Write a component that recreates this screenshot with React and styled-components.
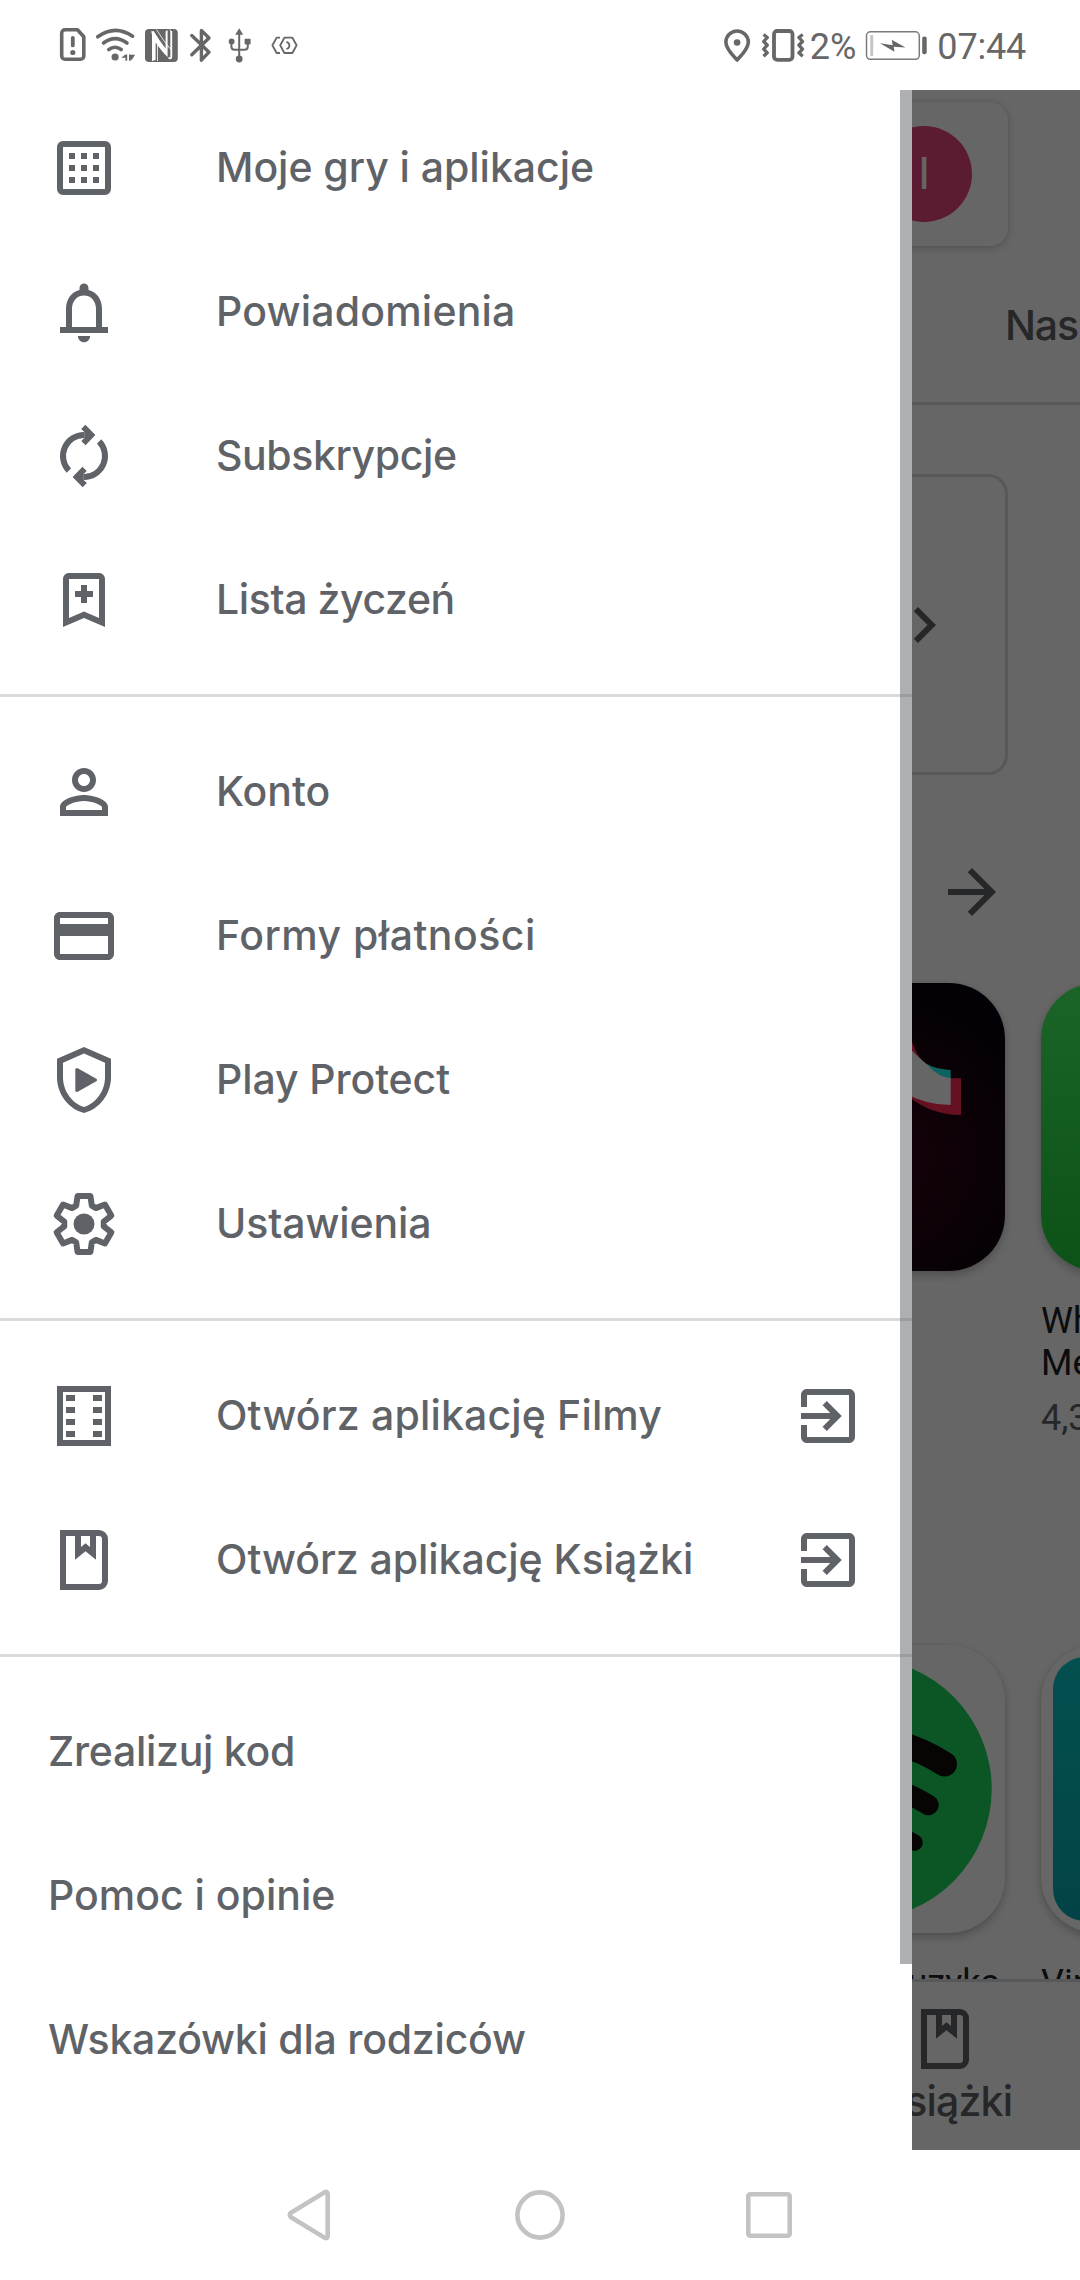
import React from "react";
import styled, { createGlobalStyle } from "styled-components";

const GlobalStyle = createGlobalStyle`
  *, *::before, *::after { box-sizing: border-box; }
  body { margin: 0; background: #fff; }
`;

const brandFont = `Inter, "Open Sans", sans-serif`;
const systemFont = `Roboto, "Noto Sans", sans-serif`;

const Phone = styled.div`
  display: flex;
  flex-direction: column;
  width: 1080px;
  height: 2280px;
  overflow: hidden;
  background: #fff;
`;

/* ---------- status bar ---------- */

const StatusBar = styled.header`
  display: flex;
  justify-content: space-between;
  align-items: center;
  flex: none;
  height: 90px;
  padding: 0 54px 0 59px;
  color: #676767;
  font: 400 36px/42px ${systemFont};
`;

const StatusGroup = styled.div`
  display: flex;
  align-items: center;
`;

const StatusIcon = styled.svg`
  display: block;
  flex: none;
  width: ${(p) => p.$w}px;
  height: 40px;
  margin-right: ${(p) => p.$gap || 0}px;
  overflow: visible;
`;

const StatusText = styled.span`
  padding-top: 3px;
  margin-right: ${(p) => p.$gap || 0}px;
  letter-spacing: ${(p) => p.$track || 0}px;
`;

/* ---------- viewport ---------- */

const Viewport = styled.div`
  position: relative;
  flex: none;
  height: 2060px;
  overflow: hidden;
`;

const Store = styled.main`
  display: flex;
  flex-direction: column;
  height: 100%;
  background: #fff;
`;

const StoreBody = styled.div`
  flex: none;
  height: 1889px;
  overflow: hidden;
`;

const SearchCard = styled.div`
  display: flex;
  align-items: center;
  justify-content: flex-end;
  width: 936px;
  height: 144px;
  margin: 12px 0 0 72px;
  padding-right: 36px;
  border-radius: 18px;
  background: #fff;
  box-shadow: 0 2px 9px rgba(0, 0, 0, 0.2), 0 0 3px rgba(0, 0, 0, 0.08);
`;

const Avatar = styled.div`
  display: flex;
  align-items: center;
  justify-content: center;
  width: 96px;
  height: 96px;
  border-radius: 50%;
  background: #e3447a;
  color: #fff;
  font: 400 45px/48px ${systemFont};
`;

const TabStrip = styled.nav`
  display: flex;
  align-items: center;
  justify-content: flex-end;
  height: 159px;
  padding-top: 1px;
  border-bottom: 3px solid #dadce0;
`;

const Tab = styled.span`
  width: 75px;
  white-space: nowrap;
  overflow: hidden;
  color: #5f6368;
  font: 500 41px/54px ${brandFont};
  letter-spacing: -1.2px;
`;

const PromoCard = styled.div`
  display: flex;
  align-items: center;
  justify-content: flex-end;
  width: 936px;
  height: 301px;
  margin: 69px 0 0 72px;
  padding-right: 45px;
  border: 3px solid #dadce0;
  border-radius: 20px;
`;

const Icon = styled.svg`
  display: block;
  flex: none;
  width: 72px;
  height: 72px;
  fill: ${(p) => p.$color || "#5f6368"};
`;

const SectionHeader = styled.div`
  display: flex;
  justify-content: flex-end;
  padding: 81px 72px 55px;
`;

const AppRow = styled.div`
  display: flex;
  gap: 36px;
  height: ${(p) => p.$h}px;
  padding-left: 717px;
`;

const AppCell = styled.div`
  display: flex;
  flex-direction: column;
  flex: none;
  width: 288px;
`;

const AppIcon = styled.div`
  display: flex;
  align-items: center;
  justify-content: center;
  flex: none;
  width: 288px;
  height: 288px;
  overflow: hidden;
  border-radius: 56px;
  background: ${(p) => p.$bg || "#fff"};
  box-shadow: 0 4px 10px rgba(0, 0, 0, 0.24), 0 0 3px rgba(0, 0, 0, 0.06);

  svg {
    display: block;
    width: 288px;
    height: 288px;
  }
`;

const TealTile = styled.div`
  width: 264px;
  height: 264px;
  border-radius: 32px;
  background: linear-gradient(#09c8ca, #08a8b2);
`;

const AppName = styled.div`
  margin-top: 29px;
  color: #202124;
  font: 400 36px/42px ${systemFont};
  white-space: pre-line;
  text-align: ${(p) => p.$align || "left"};
  padding-right: 5px;
`;

const AppRating = styled.div`
  margin-top: 13px;
  color: #5f6368;
  font: 400 36px/42px ${systemFont};
`;

const BottomNav = styled.nav`
  display: flex;
  justify-content: flex-end;
  flex: 1;
  padding: 21px 45px 0 0;
  border-top: 3px solid #dadce0;
`;

const BottomTab = styled.div`
  display: flex;
  flex-direction: column;
  align-items: center;
  width: 180px;
  color: #5f6368;
  font: 500 41px/53px ${brandFont};
  letter-spacing: -0.8px;
`;

/* ---------- drawer ---------- */

const Scrim = styled.div`
  position: absolute;
  inset: 0;
  background: rgba(0, 0, 0, 0.6);
`;

const Drawer = styled.aside`
  position: absolute;
  inset: 0 auto 0 0;
  width: 912px;
  padding-top: 6px;
  background: #fff;
`;

const ScrollThumb = styled.div`
  position: absolute;
  top: 0;
  right: 0;
  width: 12px;
  height: 1874px;
  background: rgba(92, 96, 104, 0.5);
`;

const Group = styled.ul`
  list-style: none;
  margin: 0;
  padding: 0 0 22px;

  & + & {
    padding-top: 23px;
    border-top: 3px solid #dbdbde;
  }
`;

const Item = styled.li`
  display: flex;
  align-items: center;
  height: 144px;
  padding: 0 48px;
`;

const ItemLabel = styled.span`
  flex: 1;
  padding-bottom: 2px;
  margin-left: ${(p) => (p.$inset ? 96 : 0)}px;
  color: #5f6368;
  font: 500 41px/54px ${brandFont};
  letter-spacing: ${(p) => p.$track || 0}px;
  white-space: nowrap;
`;

/* ---------- system navigation ---------- */

const SystemNav = styled.footer`
  display: flex;
  align-items: center;
  flex: 1;
  padding-left: 283px;
`;

const NavGlyph = styled.svg`
  display: block;
  width: 54px;
  height: 54px;
  margin-right: ${(p) => p.$gap || 0}px;
  fill: none;
  stroke: #c3c3c3;
  stroke-width: 4.6;
  stroke-linejoin: round;
`;

/* ---------- icon drawings (24 unit grid) ---------- */

const rotate = ([x, y], deg) => {
  const a = (deg * Math.PI) / 180;
  return [
    12 + x * Math.cos(a) - y * Math.sin(a),
    12 + x * Math.sin(a) + y * Math.cos(a),
  ];
};

const gearTooth = [[-2.6, -6.1], [-2.15, -9.3], [2.15, -9.3], [2.6, -6.1]];
const gearPoints = [0, 60, 120, 180, 240, 300]
  .flatMap((deg) => gearTooth.map((pt) => rotate(pt, deg)))
  .map(([x, y]) => `${x.toFixed(2)},${y.toFixed(2)}`)
  .join(" ");

const grid = [7, 11, 15];
const perforations = [5, 9, 13, 17];

const Glyph = {
  apps: (
    <>
      <path fillRule="evenodd" d="M5 3h14a2 2 0 0 1 2 2v14a2 2 0 0 1-2 2H5a2 2 0 0 1-2-2V5a2 2 0 0 1 2-2zM5 5v14h14V5z" />
      {grid.flatMap((y) => grid.map((x) => <rect key={`${x}-${y}`} x={x} y={y} width="2" height="2" />))}
    </>
  ),
  bell: (
    <path d="M20 17h-2v-6c0-3.07-1.63-5.64-4.5-6.32V4c0-.83-.67-1.5-1.5-1.5s-1.5.67-1.5 1.5v.68C7.64 5.36 6 7.92 6 11v6H4v2h16v-2zm-4 0H8v-6c0-2.48 1.51-4.5 4-4.5s4 2.02 4 4.5v6zM12 22.1c1.1 0 2-.9 2.05-2.1h-4.1c.05 1.2.95 2.1 2.05 2.1z" />
  ),
  sync: (
    <>
      <g fill="none" stroke="#5f6368" strokeWidth="2">
        <path d="M12.1 5A7 7 0 0 0 6.95 16.85" />
        <path d="M11.9 19A7 7 0 0 0 17.05 7.15" />
      </g>
      <path d="M12.45 1.6 11.05 3l1.05 1v2l-1 1 1.4 1.4L15.8 5z" />
      <path d="M11.55 22.4 12.95 21l-1.05-1v-2l1-1-1.4-1.4L8.2 19z" />
    </>
  ),
  wishlist: (
    <>
      <path d="M17 3H7c-1.1 0-2 .9-2 2v16l7-3 7 3V5c0-1.1-.9-2-2-2zm0 14.97-5-2.17-5 2.17V5h10v12.97z" />
      <path d="M11 7h2v2h2v2h-2v2h-2v-2H9V9h2z" />
    </>
  ),
  person: (
    <path d="M12 12c2.21 0 4-1.79 4-4s-1.79-4-4-4-4 1.79-4 4 1.79 4 4 4zm0-6c1.1 0 2 .9 2 2s-.9 2-2 2-2-.9-2-2 .9-2 2-2zM12 13c-2.67 0-8 1.34-8 4v3h16v-3c0-2.66-5.33-4-8-4zm6 5H6v-.99c.2-.72 3.3-2.01 6-2.01s5.8 1.29 6 2v1z" />
  ),
  card: (
    <path d="M20 4H4c-1.11 0-2 .89-2 2v12c0 1.11.89 2 2 2h16c1.11 0 2-.89 2-2V6c0-1.11-.89-2-2-2zm0 14H4v-6h16v6zm0-10H4V6h16v2z" />
  ),
  shield: (
    <>
      <path d="M12 1 3 4.9v6.2c0 5.55 3.84 10.65 9 11.9 5.16-1.25 9-6.35 9-11.9V4.9L12 1zm7 10.1c0 4.52-2.98 8.66-7 9.9-4.02-1.24-7-5.38-7-9.9V6.25l7-3.05 7 3.05v4.85z" />
      <path d="M9.9 8.1 16.1 11.6a.45.45 0 0 1 0 .8L9.9 15.9a.5.5 0 0 1-.8-.4v-7a.5.5 0 0 1 .8-.4z" />
    </>
  ),
  settings: (
    <>
      <polygon points={gearPoints} fill="none" stroke="#5f6368" strokeWidth="2" strokeLinejoin="round" />
      <circle cx="12" cy="12" r="3.5" />
    </>
  ),
  film: (
    <>
      <path fillRule="evenodd" d="M3 2h18v20H3zM5 4v16h14V4z" />
      {perforations.flatMap((y) => [6, 15].map((x) => <rect key={`${x}-${y}`} x={x} y={y} width="3" height="2" />))}
    </>
  ),
  book: (
    <>
      <path fillRule="evenodd" d="M4 2h13a3 3 0 0 1 3 3v14a3 3 0 0 1-3 3H4zM6 4v16h11a1 1 0 0 0 1-1V5a1 1 0 0 0-1-1z" />
      <path fillRule="evenodd" d="M9 3.5h7v8.4l-3.5-2.85L9 11.9zM11 4v3.7l1.5-1.3L14 7.7V4z" />
    </>
  ),
  exit: (
    <path d="M10.19 15.59 11.6 17l5-5-5-5-1.41 1.41L12.77 11H3v2h9.77l-2.58 2.59zM19 3H5c-1.11 0-2 .9-2 2v4h2V5h14v14H5v-4H3v4c0 1.1.89 2 2 2h14c1.1 0 2-.9 2-2V5c0-1.1-.9-2-2-2z" />
  ),
  chevron: <path d="M10 6 8.59 7.41 13.17 12l-4.58 4.59L10 18l6-6z" />,
  arrow: <path d="m12 4-1.41 1.41L16.17 11H4v2h12.17l-5.58 5.59L12 20l8-8z" />,
};

const GlyphIcon = ({ name }) => <Icon viewBox="0 0 24 24">{Glyph[name]}</Icon>;

const menu = [
  [
    { icon: "apps", label: "Moje gry i aplikacje", track: -0.04 },
    { icon: "bell", label: "Powiadomienia", track: 0.2 },
    { icon: "sync", label: "Subskrypcje", track: -0.4 },
    { icon: "wishlist", label: "Lista życzeń", track: -0.4 },
  ],
  [
    { icon: "person", label: "Konto" },
    { icon: "card", label: "Formy płatności", track: 0.48 },
    { icon: "shield", label: "Play Protect", track: -0.1 },
    { icon: "settings", label: "Ustawienia", track: -0.12 },
  ],
  [
    { icon: "film", label: "Otwórz aplikację Filmy", track: 0.16, external: true },
    { icon: "book", label: "Otwórz aplikację Książki", track: -0.05, external: true },
  ],
  [
    { label: "Zrealizuj kod", track: -0.28 },
    { label: "Pomoc i opinie", track: 0 },
    { label: "Wskazówki dla rodziców", track: -0.22 },
  ],
];

const StatusIcons = () => (
  <StatusGroup>
    <StatusIcon $w={28} $gap={8} viewBox="59 25 28 40">
      <path d="M65 29.8h12.5l6.3 7V56a3.3 3.3 0 0 1-3.3 3.3H65a3.3 3.3 0 0 1-3.3-3.3V33.1a3.3 3.3 0 0 1 3.3-3.3z" fill="none" stroke="#676767" strokeWidth="3.6" strokeLinejoin="round" />
      <path d="M72.8 37.8v7.6" stroke="#676767" strokeWidth="3.8" strokeLinecap="round" />
      <circle cx="72.8" cy="52.5" r="2.6" fill="#676767" />
    </StatusIcon>
    <StatusIcon $w={41} $gap={8} viewBox="95 25 41 40">
      <g fill="none" stroke="#676767" strokeWidth="3.6" strokeLinecap="round">
        <path d="M97.7 36.8Q115 24.2 132.6 36.2" />
        <path d="M103.5 43Q115 34.4 127 43" />
        <path d="M108.8 49.5Q115 45 121.2 49.5" />
      </g>
      <circle cx="115.1" cy="57" r="3.6" fill="#676767" />
      <path d="M125.4 54.6v3.2h-4.2zM125.4 54.6h1.8v6.2h-1.8zM129 54.6h1.7v6.2H129zM130.7 54.8h4.4l-3.2 5h-1.2z" fill="#676767" />
    </StatusIcon>
    <StatusIcon $w={34} $gap={11} viewBox="144 25 34 40">
      <rect x="145" y="29" width="32.8" height="33" rx="4" fill="#676767" />
      <path d="M151 31.5q1 1 1 4V61l3.6-1V42.500q7 10 12 14.500V30l-2 1.500v17q-7-9-12-17.500z" fill="#fff" />
      <path d="M156.500 29.500Q164 42 171.300 50V34q0-3-1.500-4.500M157.500 44v17" fill="none" stroke="#fff" strokeWidth="0.8" />
      <path d="M168.500 57.500q2.600 2 2.800-.5V31" fill="none" stroke="#fff" strokeWidth="1.8" />
    </StatusIcon>
    <StatusIcon $w={24} $gap={14} viewBox="189 25 24 40">
      <path d="M191.8 35.5 209 52.2l-7.6 8V30.4l7.6 7.6-17.2 16.8" fill="none" stroke="#676767" strokeWidth="3.4" strokeLinejoin="round" strokeLinecap="round" />
    </StatusIcon>
    <StatusIcon $w={24} $gap={20} viewBox="227 25 24 40">
      <path d="M239.2 33v26M231.4 41v5.4q0 3.4 3.4 3.4h9.6q3.4 0 3.4-3.4V41" fill="none" stroke="#676767" strokeWidth="2" />
      <path d="M239.2 28.2l4 6.6h-8z" fill="#676767" />
      <circle cx="231.6" cy="41.4" r="2.9" fill="#676767" />
      <rect x="244.6" y="38.8" width="6" height="5.6" rx="0.8" fill="#676767" />
      <circle cx="239.2" cy="59" r="3.4" fill="#676767" />
    </StatusIcon>
    <StatusIcon $w={28} viewBox="271 25 28 40">
      <path d="M284.4 37.7h8l4.2 7.6-4.2 7.7h-8l-4.2-7.7zM280 37.7h-3.4l-4.2 7.6 4.2 7.7h3.4" fill="none" stroke="#676767" strokeWidth="1.8" strokeLinejoin="round" />
      <path d="M286.4 41.8q3 1 3 3.6t-3 3.6" fill="none" stroke="#676767" strokeWidth="1.8" />
    </StatusIcon>
  </StatusGroup>
);

const StatusInfo = () => (
  <StatusGroup>
    <StatusIcon $w={28} $gap={10} viewBox="723 25 28 40">
      <path d="M737.1 60c-4.6-5-11.2-11.2-11.2-17.8a11.2 11.2 0 0 1 22.4 0c0 6.6-6.6 12.8-11.2 17.8z" fill="none" stroke="#676767" strokeWidth="3.6" strokeLinejoin="round" />
      <circle cx="737.1" cy="42.5" r="3.3" fill="#676767" />
    </StatusIcon>
    <StatusIcon $w={44} $gap={5} viewBox="761 25 44 40">
      <rect x="774" y="31" width="18.5" height="28.8" rx="3.2" fill="none" stroke="#676767" strokeWidth="3.8" />
      <path d="M763.5 34.5l3.8 3-3.6 4 3.6 3.7-3.6 3.9 3.6 3.7-3.8 3.5M802.7 34.5l-3.8 3 3.6 4-3.6 3.7 3.6 3.9-3.6 3.7 3.8 3.5" fill="none" stroke="#676767" strokeWidth="3.3" strokeLinejoin="round" />
    </StatusIcon>
    <StatusText $gap={9}>2%</StatusText>
    <StatusIcon $w={62} $gap={10} viewBox="865 25 62 40">
      <rect x="866.5" y="31.8" width="52.8" height="27.5" rx="4" fill="none" stroke="#7b7b7b" strokeWidth="1.5" />
      <rect x="870.3" y="35" width="2.9" height="21" rx="1" fill="#c4c4c4" />
      <path d="M880 43.2l12.7 2.1-1-5.6L905.5 47.6l-11.8-.9.8 5z" fill="#676767" />
      <rect x="922.2" y="36.6" width="4.5" height="17.6" rx="2" fill="#676767" />
    </StatusIcon>
    <StatusText $track={-0.2}>07:44</StatusText>
  </StatusGroup>
);

const ShortVideoLogo = () => (
  <svg viewBox="717 983 288 288">
    <defs>
      <radialGradient id="stage" cx="0.55" cy="0.6" r="0.6">
        <stop offset="0" stopColor="#3c0418" />
        <stop offset="0.6" stopColor="#1c0310" />
        <stop offset="1" stopColor="#08040e" />
      </radialGradient>
    </defs>
    <rect x="717" y="983" width="288" height="288" fill="url(#stage)" />
    <path d="M908 1028Q914 1054 925 1063.5L950 1078.3H961V1115q-30 0-53-19z" fill="#fe2c55" />
    <path d="M924 1062.5Q936 1069.5 950.7 1070v8.5Q936 1077 924 1062.5z" fill="#25f4ee" />
    <path d="M905 1044Q917 1056 928 1065.5 939 1077.5 950.7 1078v27q-25 0-45.7-12z" fill="#fff" />
  </svg>
);

const MusicLogo = () => (
  <svg viewBox="717 1645 288 288">
    <circle cx="861" cy="1789" r="130.7" fill="#1ed75f" />
    <g fill="none" stroke="#100e0c" strokeLinecap="round">
      <path d="M777 1744Q875 1720 944.5 1764" strokeWidth="25" />
      <path d="M783 1786Q865 1766 928.5 1805" strokeWidth="20.5" />
      <path d="M790 1826Q860 1810 914.5 1842.5" strokeWidth="16.5" />
    </g>
  </svg>
);

export default function App() {
  return (
    <Phone>
      <GlobalStyle />
      <StatusBar>
        <StatusIcons />
        <StatusInfo />
      </StatusBar>

      <Viewport>
        <Store>
          <StoreBody>
            <SearchCard>
              <Avatar>I</Avatar>
            </SearchCard>
            <TabStrip>
              <Tab>Nasz</Tab>
            </TabStrip>
            <PromoCard>
              <GlyphIcon name="chevron" />
            </PromoCard>
            <SectionHeader>
              <GlyphIcon name="arrow" />
            </SectionHeader>
            <AppRow $h={662}>
              <AppCell>
                <AppIcon>
                  <ShortVideoLogo />
                </AppIcon>
              </AppCell>
              <AppCell>
                <AppIcon $bg="linear-gradient(#46fa64, #20cd3a)" />
                <AppName>{"WhatsApp\nMessenger"}</AppName>
                <AppRating>4,3</AppRating>
              </AppCell>
            </AppRow>
            <AppRow $h={400}>
              <AppCell>
                <AppIcon>
                  <MusicLogo />
                </AppIcon>
                <AppName $align="right">Spotify: muzyka</AppName>
              </AppCell>
              <AppCell>
                <AppIcon>
                  <TealTile />
                </AppIcon>
                <AppName>Vinted</AppName>
              </AppCell>
            </AppRow>
          </StoreBody>
          <BottomNav>
            <BottomTab>
              <GlyphIcon name="book" />
              Książki
            </BottomTab>
          </BottomNav>
        </Store>

        <Scrim />

        <Drawer>
          {menu.map((items) => (
            <Group key={items[0].label}>
              {items.map(({ icon, label, track, external }) => (
                <Item key={label}>
                  {icon && <GlyphIcon name={icon} />}
                  <ItemLabel $inset={Boolean(icon)} $track={track}>
                    {label}
                  </ItemLabel>
                  {external && <GlyphIcon name="exit" />}
                </Item>
              ))}
            </Group>
          ))}
          <ScrollThumb />
        </Drawer>
      </Viewport>

      <SystemNav>
        <NavGlyph $gap={176} viewBox="0 0 54 54">
          <path d="M44.7 5.5v43a1.8 1.8 0 0 1-2.8 1.4L8 29.2a2.6 2.6 0 0 1 0-4.4L41.9 4.1a1.8 1.8 0 0 1 2.8 1.4z" />
        </NavGlyph>
        <NavGlyph $gap={175} viewBox="0 0 54 54">
          <circle cx="27" cy="27" r="22.6" />
        </NavGlyph>
        <NavGlyph viewBox="0 0 54 54">
          <rect x="6.3" y="6.3" width="41.4" height="41.4" rx="2" />
        </NavGlyph>
      </SystemNav>
    </Phone>
  );
}
